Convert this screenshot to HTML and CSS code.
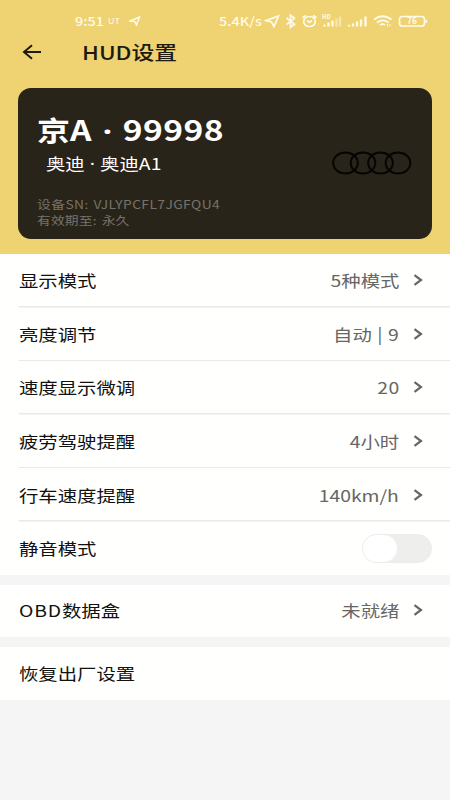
FILE: index.html
```html
<!DOCTYPE html>
<html lang="zh-CN">
<head>
<meta charset="utf-8">
<title>HUD设置</title>
<link rel="stylesheet" href="styles.css">
</head>
<body>
<header class="hero">
  <div class="status">
    <span class="wide time">9:51</span>
    <span class="wide ut">UT</span>
    <svg class="nav-small" width="12" height="10" viewBox="0 0 12 10"><path d="M1 5 10.500 1 7.500 9 6 5.600Z"/></svg>
    <span class="wide speed">5.4K/s</span>
    <svg class="sys" width="166" height="18" viewBox="0 0 166 18">
      <path d="M2 8.600 14.500 4 10 14.500 7.500 10Z"/>
      <path d="M22.500 6 30.500 12.200 26.500 15.200V3.200L30.500 6.300 22.500 12.500"/>
      <ellipse cx="45.500" cy="9.500" rx="5.800" ry="5"/>
      <path d="M43 8.500 45.500 10.500 48 8.500M38.500 5.800 42 3.400M49 3.400 52.500 5.800"/>
      <text x="58" y="7">HD</text>
      <path class="bar" d="M60.500 14.500V12.500M64.500 14.500V10.500M68.500 14.500V8.500M85 14.500V12.800M89 14.500V11.500M93 14.500V9.500M97 14.500V7.500M101.500 14.500V4.500"/>
      <path class="bar dim" d="M72.500 14.500V6.500M76 14.500V4.500"/>
      <path class="wifi" d="M110 7.500Q118.500 1 127.500 7.500M113 10.500Q118.500 6.300 124.500 10.500M116 13Q118.500 11.300 121 13"/>
      <path class="small" d="M123.500 14.500V12M126 12V14.500"/>
      <rect x="135.500" y="4.500" width="25" height="9.500" rx="2.800"/>
      <path d="M162.300 7.800V10.800"/>
      <text class="pct" x="143" y="12.200">76</text>
    </svg>
  </div>
  <div class="bar-title">
    <svg width="20" height="18" viewBox="0 0 20 18"><path d="M19 9H2.500M10 2.300 2 9 10 15.700"/></svg>
    <h1 class="wide">HUD设置</h1>
  </div>
  <section class="card">
    <div class="info">
      <div class="wide plate">京<span class="latin">A</span><span class="dot">·</span><span class="latin">99998</span></div>
      <div class="wide model">奥迪<span class="dot">·</span>奥迪A1</div>
      <div class="wide meta sn">设备SN: VJLYPCFL7JGFQU4</div>
      <div class="wide meta">有效期至: 永久</div>
    </div>
    <svg class="rings" width="80" height="24" viewBox="0 0 80 24">
      <ellipse cx="13.500" cy="12" rx="12.300" ry="10.500"/><ellipse cx="31" cy="12" rx="12.300" ry="10.500"/><ellipse cx="48.500" cy="12" rx="12.300" ry="10.500"/><ellipse cx="66" cy="12" rx="12.300" ry="10.500"/>
    </svg>
  </section>
</header>
<main>
  <section class="group">
    <div class="row"><span class="wide">显示模式</span><span class="wide value">5种模式</span><svg class="chev" viewBox="0 0 10 12"><path d="M1.500 1.200 8 6 1.500 10.800"/></svg></div>
    <div class="row"><span class="wide">亮度调节</span><span class="wide value spaced">自动 | 9</span><svg class="chev" viewBox="0 0 10 12"><path d="M1.500 1.200 8 6 1.500 10.800"/></svg></div>
    <div class="row"><span class="wide">速度显示微调</span><span class="wide value number">20</span><svg class="chev" viewBox="0 0 10 12"><path d="M1.500 1.200 8 6 1.500 10.800"/></svg></div>
    <div class="row"><span class="wide">疲劳驾驶提醒</span><span class="wide value">4小时</span><svg class="chev" viewBox="0 0 10 12"><path d="M1.500 1.200 8 6 1.500 10.800"/></svg></div>
    <div class="row"><span class="wide">行车速度提醒</span><span class="wide value">140km/h</span><svg class="chev" viewBox="0 0 10 12"><path d="M1.500 1.200 8 6 1.500 10.800"/></svg></div>
    <div class="row"><span class="wide">静音模式</span><span class="switch"><span class="knob"></span></span></div>
  </section>
  <section class="group">
    <div class="row"><span class="wide"><span class="obd">OBD</span>数据盒</span><span class="wide value">未就绪</span><svg class="chev" viewBox="0 0 10 12"><path d="M1.500 1.200 8 6 1.500 10.800"/></svg></div>
  </section>
  <section class="group">
    <div class="row"><span class="wide">恢复出厂设置</span></div>
  </section>
</main>
</body>
</html>
```
FILE: styles.css
```css
* { box-sizing: border-box; }
body {
  margin: 0;
  height: 800px;
  overflow: hidden;
  background: #f5f5f5;
  color: #111;
  font-family: "Noto Sans CJK SC", sans-serif;
  font-size: 16.150px;
}
svg { display: block; flex: none; fill: none; }
.wide {
  display: block;
  white-space: nowrap;
  transform: scaleX(1.2);
  transform-origin: left center;
}
.hero { height: 254px; background: #efd272; }
.status {
  height: 34px;
  padding: 12px 0 0 75px;
  display: flex;
  color: #fffbea;
  font-weight: 500;
  font-size: 12px;
  line-height: 18px;
}
.time { width: 33px; }
.ut { width: 21px; font-size: 7.500px; font-weight: 400; }
.nav-small { margin-top: 4px; stroke: #fffbea; stroke-width: 1.500; }
.speed { margin-left: 78px; width: 45px; }
.sys { stroke: #fffbea; stroke-width: 1.700; }
.sys text { fill: #fffbea; stroke: none; font-size: 6px; font-weight: 700; }
.sys .pct { font-size: 8.500px; }
.sys .bar { stroke-width: 2.300; }
.sys .dim { opacity: .5; }
.sys .wifi { stroke-width: 1.900; }
.sys .small { stroke-width: 1; }
.bar-title { height: 36px; padding-left: 22px; display: flex; align-items: center; gap: 40px; }
.bar-title svg { stroke: #1d1a10; stroke-width: 2; }
h1 { margin: 0; font-size: 19px; font-weight: 500; line-height: 28px; color: #1d1a10; }
.card {
  height: 151px;
  margin: 18px 18px 0;
  padding: 23px 20px 0 19px;
  display: flex;
  justify-content: space-between;
  background: #292419;
  border-radius: 13px;
  color: #fff;
}
.plate { font-size: 27.500px; font-weight: 700; line-height: 36px; }
.latin { font-size: 28px; letter-spacing: .4px; }
.dot { display: inline-block; text-align: center; font-family: "Noto Sans", sans-serif; line-height: 1; }
.plate .dot { width: 25.500px; }
.model { margin: 4px 0 0 9px; line-height: 24px; }
.model .dot { width: 12.800px; }
.meta { font-size: 11.500px; line-height: 16px; color: #77736a; letter-spacing: .1px; word-spacing: 1.500px; }
.sn { margin-top: 21px; letter-spacing: .35px; word-spacing: 1px; }
.rings { margin-top: 40px; stroke: #050504; stroke-width: 2; }
.group { margin-bottom: 10px; background: #fffffd; }
.row {
  height: 53.600px;
  padding: 0 18px 1px 19px;
  display: flex;
  align-items: center;
  background: linear-gradient(#e8e9ea, #e8e9ea) 19px 100% / 100% 1.500px no-repeat;
}
.row:last-child { height: 52.600px; background: none; }
.value { margin-left: auto; margin-right: 14px; transform-origin: right center; color: #666; }
.spaced { word-spacing: 1px; }
.number { letter-spacing: .5px; margin-right: 13px; }
.obd { letter-spacing: .7px; }
.chev { width: 10px; height: 12px; margin-right: 9px; stroke: #666; stroke-width: 2.200; }
.switch {
  width: 70px;
  height: 29px;
  margin: 1px 0 0 auto;
  border: 1px solid #ececec;
  border-radius: 15px;
  background: #eeeeed;
}
.knob { display: block; width: 34px; height: 27px; border-radius: 14px; background: #fff; }
```
